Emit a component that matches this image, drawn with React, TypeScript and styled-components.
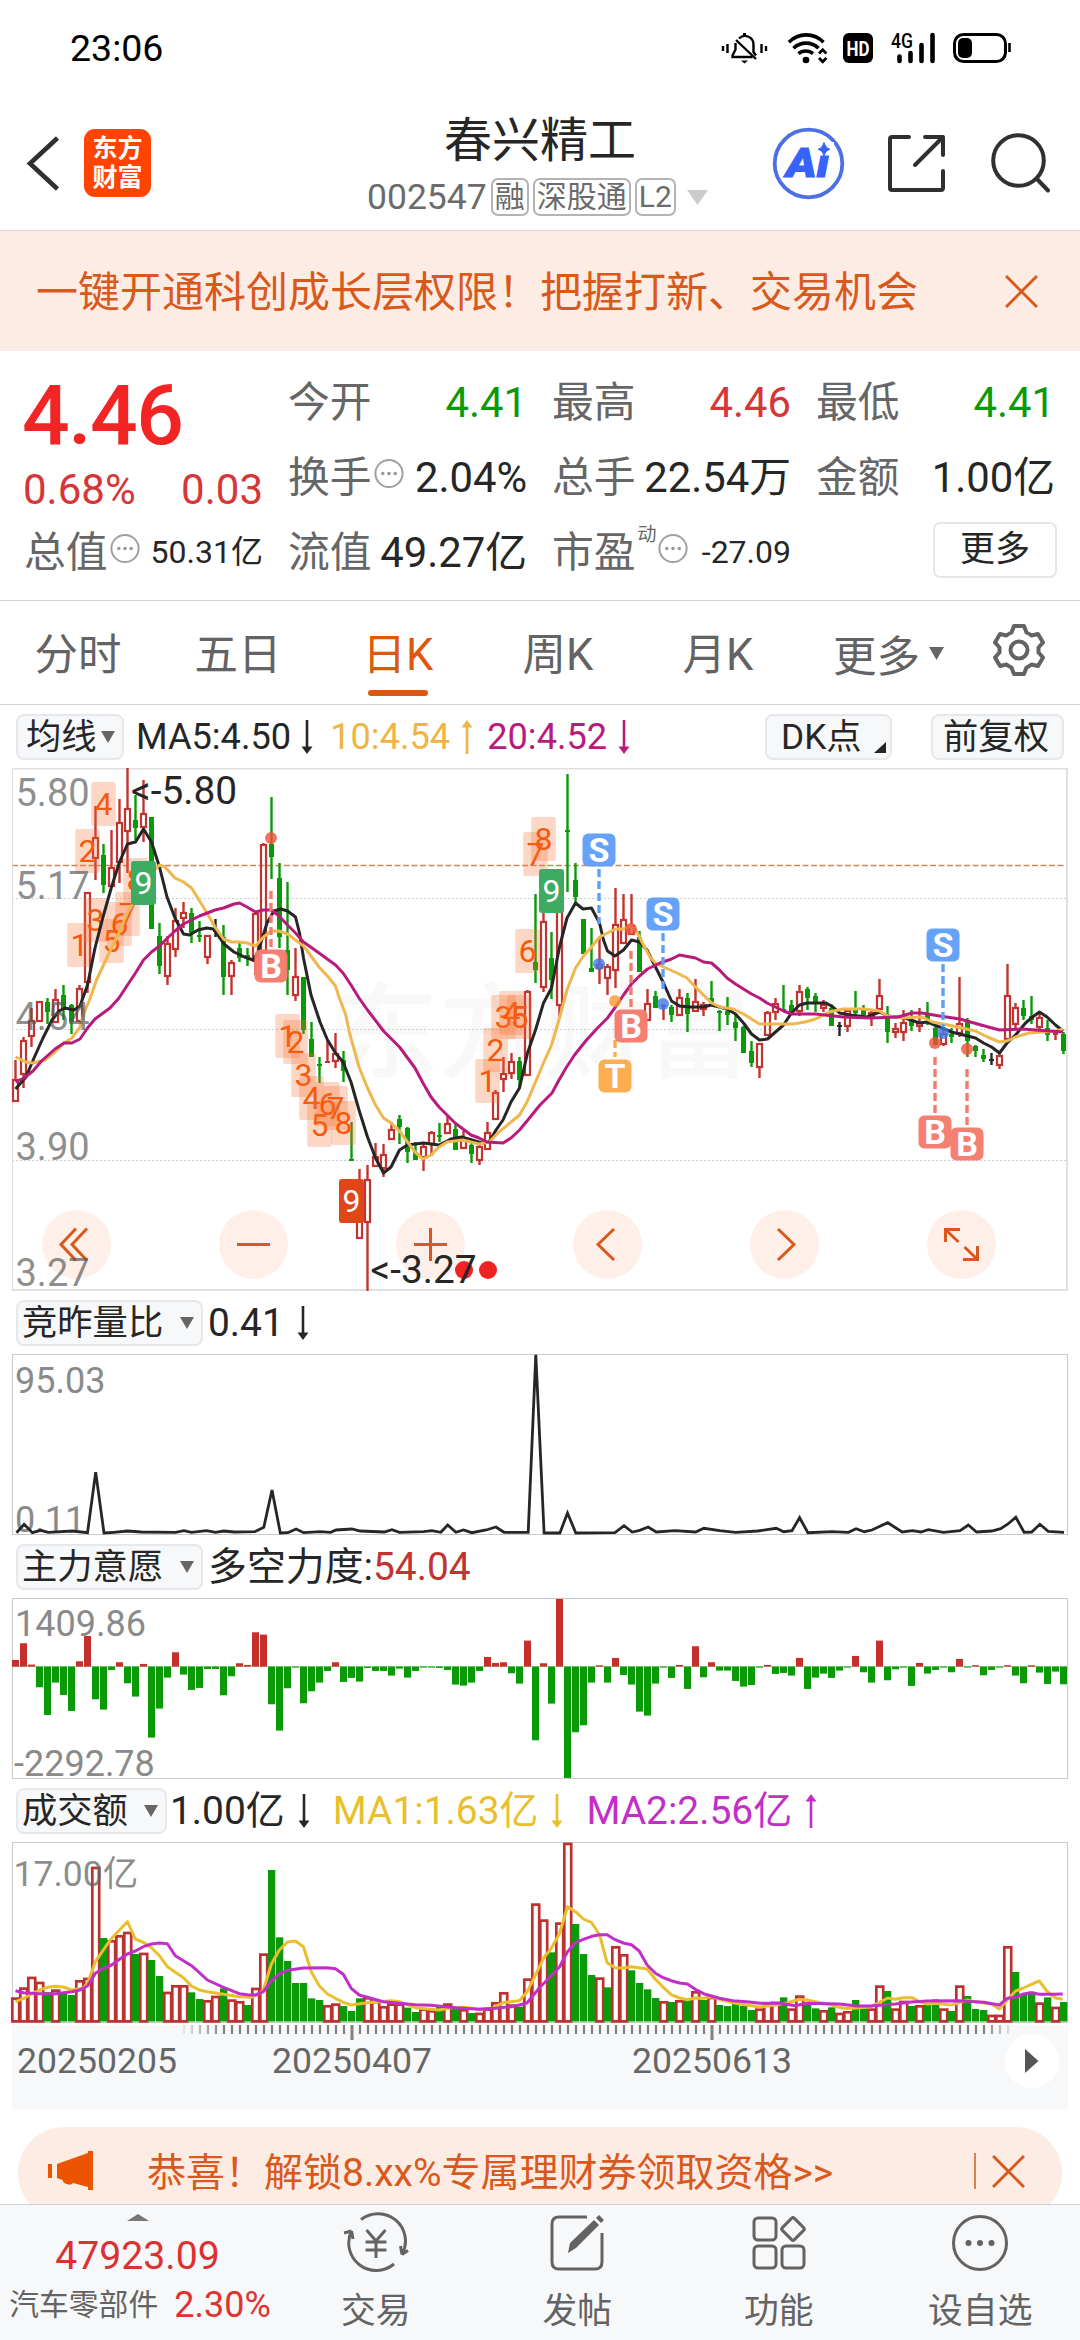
import React from "react";
import styled, { createGlobalStyle } from "styled-components";

const FONT = `Roboto, "Noto Sans CJK SC", sans-serif`;
const UP = "#c23431";
const DOWN = "#0a9a08";
const ORANGE = "#d9591d";

const Global = createGlobalStyle`
  html, body { margin: 0; padding: 0; background: #fff; }
  * { box-sizing: border-box; }
  body { font-family: ${FONT}; color: #262626; }
`;

/* ---------- market data ---------- */

type Kind = "r" | "g" | "k";
type Candle = [Kind, number, number, number, number];

const candles: Candle[] = [
  ["r", 1060, 1079, 1102, 1102], ["r", 1037, 1040, 1075, 1088], ["r", 1008, 1020, 1037, 1047], ["r", 1001, 1001, 1022, 1022],
  ["g", 998, 1002, 1012, 1024], ["r", 989, 999, 1023, 1023], ["g", 985, 995, 1010, 1020], ["g", 1004, 1005, 1022, 1034],
  ["r", 985, 988, 1022, 1022], ["r", 892, 892, 983, 993], ["r", 806, 837, 859, 880], ["g", 844, 855, 885, 893],
  ["r", 830, 867, 887, 887], ["r", 799, 822, 863, 883], ["r", 768, 808, 832, 873], ["g", 795, 820, 828, 840],
  ["r", 780, 813, 828, 842], ["g", 817, 817, 929, 929], ["g", 923, 936, 966, 974], ["r", 936, 943, 977, 985],
  ["r", 908, 920, 950, 957], ["r", 902, 912, 919, 928], ["g", 908, 913, 933, 943], ["g", 921, 935, 937, 942],
  ["r", 935, 935, 958, 964], ["k", 919, 929, 932, 937], ["g", 925, 937, 977, 995], ["r", 960, 962, 977, 995],
  ["g", 943, 948, 958, 962], ["g", 948, 955, 957, 966], ["r", 912, 913, 962, 975], ["r", 843, 844, 953, 962],
  ["g", 797, 844, 857, 879], ["g", 863, 878, 937, 948], ["g", 882, 950, 970, 995], ["r", 948, 976, 996, 1001],
  ["g", 977, 977, 1030, 1034], ["g", 1022, 1039, 1057, 1057], ["g", 1057, 1064, 1066, 1083], ["r", 1040, 1061, 1063, 1063],
  ["r", 1033, 1053, 1062, 1068], ["g", 1051, 1060, 1071, 1082], ["g", 1122, 1159, 1161, 1161], ["r", 1169, 1200, 1239, 1239],
  ["r", 1165, 1179, 1223, 1291], ["r", 1143, 1156, 1167, 1167], ["r", 1144, 1154, 1169, 1177], ["r", 1122, 1129, 1140, 1140],
  ["g", 1115, 1119, 1127, 1144], ["g", 1127, 1128, 1152, 1163], ["g", 1142, 1152, 1160, 1160], ["r", 1142, 1146, 1158, 1171],
  ["r", 1131, 1132, 1145, 1156], ["g", 1123, 1135, 1137, 1142], ["r", 1115, 1123, 1134, 1134], ["g", 1123, 1129, 1150, 1150],
  ["r", 1131, 1138, 1149, 1149], ["g", 1142, 1145, 1154, 1163], ["r", 1145, 1146, 1161, 1165], ["r", 1122, 1132, 1150, 1150],
  ["r", 1090, 1092, 1120, 1120], ["r", 1057, 1073, 1080, 1092], ["r", 1053, 1061, 1074, 1079], ["g", 1057, 1061, 1080, 1088],
  ["r", 990, 991, 1076, 1076], ["g", 894, 962, 970, 983], ["r", 890, 921, 988, 992], ["g", 932, 958, 980, 999],
  ["r", 875, 880, 1006, 1017], ["g", 774, 830, 832, 892], ["g", 863, 880, 897, 902], ["g", 919, 919, 954, 954],
  ["g", 928, 968, 972, 972], ["r", 938, 964, 969, 984], ["r", 964, 966, 979, 995], ["r", 888, 924, 971, 988],
  ["r", 894, 919, 944, 944], ["r", 894, 925, 935, 935], ["g", 931, 937, 972, 972], ["r", 989, 1003, 1021, 1021],
  ["g", 991, 996, 1008, 1008], ["r", 1004, 1005, 1007, 1020], ["g", 1005, 1007, 1015, 1022], ["r", 989, 997, 1016, 1016],
  ["g", 993, 998, 1014, 1032], ["r", 979, 1001, 1012, 1012], ["r", 1002, 1004, 1010, 1016], ["g", 981, 998, 1002, 1006],
  ["g", 1010, 1011, 1013, 1031], ["g", 997, 1011, 1015, 1025], ["g", 1015, 1022, 1028, 1041], ["g", 1026, 1027, 1053, 1053],
  ["g", 1041, 1051, 1063, 1067], ["r", 1043, 1043, 1068, 1078], ["r", 1011, 1012, 1036, 1036], ["r", 998, 1003, 1013, 1020],
  ["g", 985, 1009, 1011, 1012], ["g", 1000, 1005, 1012, 1014], ["r", 985, 991, 1012, 1016], ["g", 987, 989, 998, 1010],
  ["g", 993, 996, 1004, 1012], ["r", 1000, 1004, 1009, 1012], ["g", 1004, 1008, 1026, 1026], ["k", 1022, 1025, 1027, 1036],
  ["r", 1008, 1010, 1027, 1032], ["g", 991, 1008, 1013, 1016], ["g", 1005, 1008, 1015, 1016], ["r", 1010, 1012, 1018, 1026],
  ["r", 979, 995, 1010, 1014], ["g", 1006, 1017, 1032, 1043], ["r", 1023, 1028, 1033, 1038], ["r", 1010, 1022, 1033, 1041],
  ["g", 1010, 1020, 1026, 1031], ["r", 1008, 1022, 1027, 1032], ["g", 1002, 1013, 1020, 1025], ["g", 1026, 1028, 1045, 1045],
  ["r", 1030, 1033, 1045, 1046], ["g", 1028, 1034, 1037, 1043], ["r", 977, 1023, 1034, 1037], ["g", 1018, 1020, 1041, 1057],
  ["g", 1045, 1046, 1051, 1057], ["g", 1049, 1055, 1059, 1062], ["k", 1053, 1059, 1061, 1065], ["r", 1052, 1055, 1066, 1069],
  ["r", 964, 995, 1040, 1043], ["r", 1003, 1007, 1025, 1028], ["g", 1000, 1008, 1016, 1020], ["g", 996, 1016, 1020, 1024],
  ["r", 1012, 1017, 1028, 1030], ["g", 1020, 1028, 1035, 1041], ["r", 1032, 1033, 1035, 1040], ["g", 1032, 1034, 1051, 1054],
];

const ma5 = "15.5,1089 26,1077 34,1058 43,1038 52,1020 59,1011 65,1008 74,1010 80,1006 87.5,985 95,948 103,917 111.5,887 119.5,862 127.5,844 135.5,842 143.5,829 151.5,842 159.5,867 167,897 175,918 183.5,934 189.5,935 198,930 206.5,928 213.5,929 224,944 234,952 244.5,957 253,960 258,952 267,923 274,911 281,909 287.5,911 295.5,917 299.5,933 303.5,958 311,995 320,1022 327.5,1040 335.5,1053 343,1062 351,1082 359,1110 367.5,1137 375.5,1158 383.5,1173 391,1167 399.5,1150 407.5,1145 423.5,1143 439,1145 451,1139 461.5,1137 472,1140 482,1143 489,1142 496,1130 503,1120 511,1102 519.5,1088 527.5,1053 535.5,1030 543.5,1003 551.5,988 559.5,947 567,918 575.5,903 583,909 591.5,908 599.5,923 603.5,940 607.5,951 615,956 623.5,950 631.5,940 639.5,942 647,950 655.5,967 663.5,983 671.5,1001 679.5,1006 690,1007 703.5,1007 711,1005 719.5,1007 727,1009 735.5,1014 743.5,1023 751.5,1034 759.5,1040 767.5,1039 775.5,1032 783.5,1025 791.5,1013 799.5,1005 807,1003 826,1003 833,1007 839.5,1013 850,1015 867,1017 879.5,1012 888,1016 905,1018 919.5,1023 927.5,1022 939.5,1027 951.5,1032 967.5,1036 975.5,1038 983.5,1043 991.5,1047 999.5,1053 1007,1043 1015.5,1035 1025.5,1023 1032.5,1017 1039.5,1012 1047,1017 1055.5,1025 1063,1031";
const ma10 = "15.5,1057 26,1062 33,1063 45,1060 55,1052 64,1043 72,1038 80,1027 84,1013 89.5,1000 96.5,980 111.5,948 119.5,932 127.5,913 140,892 151.5,873 159.5,865 165,867 175,878 183.5,882 191.5,888 199,900 207,913 215,927 223.5,939 231.5,942 239,942 247,943 255.5,946 263.5,937 271.5,931 279,931 287.5,934 295.5,940 303.5,946 311,956 319,967 327.5,976 335.5,986 339,997 345.5,1014 349.5,1033 359,1067 367.5,1088 375.5,1105 383.5,1118 391,1123 399.5,1131 407.5,1142 415,1152 423,1159 431,1155 439,1147 447,1142 463,1140 479,1144 489,1142 499,1132 519.5,1115 527,1102 533,1088 543.5,1063 551.5,1045 559.5,1018 567,990 575.5,968 583.5,956 591.5,947 599.5,937 607.5,933 615.5,929 623.5,929 631.5,926 637,932 643.5,945 650,957 655.5,963 663.5,967 677,973 687,978 695.5,987 703.5,995 711.5,1003 720,1007 733,1009 743.5,1014 751.5,1019 759.5,1024 770,1024 793,1024 805,1022 815.5,1019 829,1012 843,1009 864,1009 879.5,1011 888,1016 901.5,1018 922,1017 932.5,1022 953,1026 975.5,1031 987.5,1037 999.5,1042 1007,1041 1015.5,1037 1029,1033 1043,1032 1056.5,1031 1063,1029";
const ma20 = "15.5,1082 24,1078 33,1071 41.5,1061 55,1049 64,1043 72,1043 80,1039 87.5,1028 95,1019 110,1008 119,998 127.5,985 135.5,973 143.5,960 151.5,952 159.5,946 167.5,938 175,931 183.5,924 199.5,916 215,910 223.5,908 234,904 239.5,903 247,907 255.5,912 263.5,910 271.5,910 279,916 287.5,925 295.5,933 303.5,942 319,953 335.5,965 343,973 351,985 359,998 367.5,1010 383.5,1031 399.5,1047 415,1068 423,1083 431,1097 439,1107 447,1115 455,1123 463,1129 471,1135 479,1138 487,1142 503,1143 511,1138 519.5,1130 527,1121 540,1105 552,1093 559,1080 566,1068 574.5,1055 586.5,1040 598.5,1027 607.5,1018 615.5,1007 623.5,995 631.5,984 639.5,976 647.5,969 660,963 671.5,959 679.5,955 695.5,958 703.5,962 711.5,963 719.5,970 727,978 735.5,984 751.5,994 759.5,998 767,1003 775.5,1007 783.5,1011 791.5,1014 815.5,1014 843,1017 870.5,1018 898,1017 912,1013 922,1013 939.5,1016 960,1019 981,1025 999.5,1030 1022,1029 1036,1030 1063,1032";

/* [candle index, top of the box, digit] */
const turns: [number, number, string][] = [
  [8, 923, "1"], [9, 829, "2"], [10, 898, "3"], [11, 782, "4"], [12, 919, "5"], [13, 902, "6"], [14, 892, "7"], [15, 858, "8"],
  [34, 1014, "1"], [35, 1020, "2"], [36, 1053, "3"], [37, 1076, "4"], [38, 1103, "5"], [39, 1082, "6"], [40, 1086, "7"], [41, 1101, "8"],
  [59, 1059, "1"], [60, 1028, "2"], [61, 995, "3"], [62, 991, "4"], [63, 995, "5"], [64, 929, "6"], [65, 832, "7"], [66, 817, "8"],
];
const nines: [number, number, string][] = [
  [16, 861, "#3dab61"], [42, 1179, "#e04618"], [67, 869, "#3dab61"],
];

/* [letter, x, badge y, dot y, dash start, dash end] */
const signals: [string, number, number, number, number, number][] = [
  ["B", 271, 966, 838, 891, 950], ["S", 599, 850, 964, 869, 924], ["S", 663, 914, 1004, 933, 989],
  ["T", 615, 1076, 1001, 1040, 1057], ["B", 631, 1026, 929, 951, 1008], ["S", 943, 945, 1033, 964, 1027],
  ["B", 935, 1132, 1043, 1057, 1114], ["B", 967, 1144, 1049, 1069, 1126],
];
const signalColor: Record<string, string> = { B: "#f57c6c", S: "#609ff8", T: "#fdab4b" };
const dotColor: Record<string, string> = { B: "#f0503c", S: "#3f78e8", T: "#fb9a2c" };

const ratio: [number, number][] = [
  [24, 578], [35, 553], [47, 578], [59, 571], [70, 577], [105, 573], [127, 578], [139, 397], [151, 579], [165, 577], [185, 573], [205, 576], [255, 577], [267, 572], [278, 577], [300, 572], [313, 577], [325, 573], [340, 576],
  [370, 575], [383, 562], [395, 450], [407, 579], [418, 578], [430, 567], [441, 578], [465, 575], [480, 577], [488, 570], [511, 567], [523, 573], [558, 576], [569, 569], [580, 577], [615, 575], [627, 572], [640, 577],
  [650, 555], [662, 577], [673, 570], [685, 578], [706, 570], [720, 561], [732, 577], [767, 577], [778, 44], [790, 579], [813, 579], [824, 519], [836, 579], [893, 578], [906, 557], [918, 576], [929, 571], [941, 561],
  [953, 576], [980, 572], [1010, 576], [1022, 565], [1045, 572], [1068, 577], [1100, 573], [1127, 565], [1138, 575], [1150, 572], [1161, 533], [1173, 578], [1208, 575], [1232, 577], [1243, 566], [1255, 575], [1266, 570],
  [1289, 548], [1310, 576], [1325, 572], [1337, 576], [1348, 569], [1370, 577], [1394, 572], [1406, 555], [1418, 576], [1440, 573], [1453, 566], [1464, 551], [1475, 532], [1487, 577], [1498, 576], [1510, 553], [1522, 574], [1545, 577],
];

const force = [
  960, 910, 974, 1042, 1125, 1028, 1065, 1113, 964, 888, 1078, 1109, 990, 967, 1030, 1070, 972, 1193, 1106, 1013, 937, 1004, 1050, 1044, 987, 987, 1066, 1009, 970, 975, 877, 884, 1093, 1172, 1045, 983,
  1090, 1054, 1028, 993, 967, 1026, 1014, 1025, 984, 993, 993, 1007, 986, 1013, 993, 983, 983, 984, 990, 1034, 1037, 1028, 993, 951, 969, 967, 1000, 1031, 902, 1201, 970, 1091, 777, 1314, 1177, 1156,
  1028, 976, 1028, 954, 1005, 1034, 1115, 1127, 1031, 983, 1014, 975, 1047, 919, 1012, 967, 992, 992, 1023, 1040, 1035, 983, 975, 1002, 999, 1007, 954, 1047, 1013, 1001, 1014, 992, 983, 948, 997, 1028,
  902, 1021, 988, 983, 1038, 969, 1001, 990, 983, 997, 957, 983, 976, 1006, 990, 983, 976, 1007, 1030, 976, 998, 1032, 995, 1033,
];

const turnover = (
  "r622 r592 r560 r575 g607 r598 g608 g615 r570 r563 r230 g444 r450 r435 r425 g492 r488 g510 g558 r605 r585 r585 g607 g627 r630 r617 g595 r628 r633 g645 r593 r490 g240 g442 g513 g579 g579 g625 g630 r645 r640 g648 g663 g625 r621 r632 r648 r640 r640 g653 g666 r655 r660 g650 r640 g657 r657 g669 r668 r655 r636 r606 r643 g650 r565 r340 " +
  "r388 g487 r397 r158 g402 g492 g555 r562 g592 r468 r492 g541 g579 g598 g624 r633 g636 r630 g630 r603 g630 r620 g645 g648 g640 g648 g660 r655 r640 r635 g622 r655 r616 g640 g655 r660 g652 r668 r663 g630 g655 r655 r586 g603 r655 r632 g648 r645 g640 g628 r655 g663 r586 g618 g657 g660 r674 r674 r468 g546 g615 g605 r637 g622 r650 g636"
).split(" ");

const volMa1Left = "45,635 68,626 91,612 115,600 138,592 161,589 184,591 208,600 240,595 254,580 277,515 300,480 320,450 347,420 370,395 393,447 416,457 440,473 463,497 486,530 509,547 533,563 556,588 579,600 602,605 649,613 695,620 730,622 753,610 765,600 788,523 811,480 835,456 858,453 881,470 904,545 927,587 951,612 974,625 997,637 1020,645 1067,638 1136,632 1160,635 1206,653 1275,660 1310,653 1345,652 1392,658 1430,655 1461,638 1508,632 1531,605 1568,528";
const volMa1Right = "10,505 33,475 57,430 80,350 103,365 126,387 150,398 173,435 195,518 218,533 242,534 265,530 311,537 335,568 358,592 381,614 405,624 428,629 451,624 475,625 498,620 521,628 560,638 600,645 637,651 684,645 720,638 753,628 776,630 800,635 846,645 880,655 910,655 960,650 986,637 1010,624 1032,628 1055,623 1080,623 1102,635 1125,642 1150,640 1195,645 1218,638 1241,630 1264,635 1311,642 1334,657 1357,630 1381,603 1404,594 1427,583 1450,573 1473,604 1497,624 1518,628";
const volMa2Left = "45,602 68,608 115,611 161,611 208,605 232,600 254,588 277,550 300,535 324,525 347,508 370,492 393,483 416,470 440,462 463,459 486,461 509,497 556,527 579,548 602,570 649,592 695,611 718,614 742,615 765,605 788,573 811,552 835,541 881,534 951,533 974,536 997,553 1020,595 1043,615 1067,622 1113,635 1160,640 1206,644 1252,646 1322,653 1392,658 1438,655 1485,650 1508,645 1531,638 1568,592";
const volMa2Right = "33,557 57,530 80,485 103,458 126,448 150,439 173,434 195,434 218,449 242,459 265,464 288,483 311,525 335,550 358,563 381,572 405,579 428,582 451,598 475,611 521,625 560,632 600,635 640,640 700,640 740,647 776,640 870,642 920,648 960,648 1032,642 1078,636 1125,633 1218,632 1288,637 1334,645 1357,625 1381,622 1404,612 1427,608 1450,613 1490,613 1518,612";

const xAt = (i: number) => 15.5 + 8 * i;
const toPage = (pts: string, dx: number) =>
  pts
    .split(" ")
    .map((p) => {
      const [x, y] = p.split(",").map(Number);
      return `${(dx + x / 2.904).toFixed(1)},${(1790 + y / 3).toFixed(1)}`;
    })
    .join(" ");

/* ---------- styled parts ---------- */

const Page = styled.div`
  width: 1080px;
  height: 2340px;
  display: flex;
  flex-direction: column;
  background: #fff;
  overflow: hidden;
`;

const StatusBar = styled.div`
  height: 96px;
  flex: none;
  display: flex;
  justify-content: space-between;
  padding: 26px 66px 0 70px;
`;
const Clock = styled.div`
  font-size: 37.5px;
  line-height: 44px;
  color: #000;
`;
const Header = styled.header`
  height: 135px;
  flex: none;
  display: grid;
  grid-template-columns: 340px 400px 340px;
  border-bottom: 1px solid #d4d4d4;
`;
const HeaderLeft = styled.div`
  display: flex;
  align-items: flex-start;
  padding: 33px 0 0 24px;
  gap: 20px;
`;
const Logo = styled.div`
  width: 67px;
  height: 68px;
  border-radius: 11px;
  background: #fe4400;
  color: #fff;
  font-size: 25px;
  line-height: 29px;
  font-weight: 700;
  text-align: center;
  padding-top: 5px;
`;
const HeaderMid = styled.div`
  display: flex;
  flex-direction: column;
  align-items: center;
  padding-top: 17px;
  gap: 9px;
`;
const Title = styled.div`
  font-size: 48px;
  line-height: 56px;
`;
const CodeRow = styled.div`
  display: flex;
  align-items: center;
  gap: 4px;
  padding-left: 27px;
  font-size: 36px;
  line-height: 38px;
  color: #6b6b6b;
  white-space: nowrap;
  width: 400px;
  > svg { margin-left: 7px; }
`;
const Code = styled.span`
  font-size: 35.5px;
`;
const Tag = styled.span`
  height: 38px;
  padding: 0 2px;
  border: 2px solid #b3b3b3;
  border-radius: 7px;
  font-size: 30px;
  line-height: 34px;
`;
const HeaderRight = styled.div`
  display: flex;
  padding: 29px 0 0 32px;
`;

const Banner = styled.div`
  height: 120px;
  flex: none;
  display: flex;
  align-items: center;
  justify-content: space-between;
  padding: 0 42px 0 36px;
  background: #fcece3;
  color: ${ORANGE};
  font-size: 42px;
  line-height: 60px;
  white-space: nowrap;
  > span { margin-top: 4px; }
`;

const Quote = styled.section`
  height: 250px;
  flex: none;
  display: grid;
  grid-template-columns: repeat(4, 239px);
  column-gap: 25px;
  padding: 14px 0 0 24px;
  border-bottom: 1px solid #d4d4d4;
`;
const QuoteCol = styled.div`
  display: flex;
  flex-direction: column;
`;
const Price = styled.div`
  height: 101px;
  margin-left: -2px;
  font-size: 84px;
  line-height: 102px;
  font-weight: 500;
  letter-spacing: -1.5px;
  color: #f22424;
`;
const Change = styled.div`
  height: 49px;
  margin-left: -1px;
  display: flex;
  justify-content: space-between;
  font-size: 42px;
  line-height: 48px;
  color: #d63636;
`;
const Cell = styled.div`
  height: 75px;
  display: flex;
  align-items: center;
  line-height: 75px;
  white-space: nowrap;
`;
const Label = styled.span`
  font-size: 41.8px;
  color: #666;
`;
const Value = styled.span<{ $color?: string; $small?: boolean }>`
  margin-left: auto;
  font-size: ${(p) => (p.$small ? 32 : 41.8)}px;
  color: ${(p) => p.$color || "#262626"};
`;
const Sup = styled.span`
  font-size: 19px;
  line-height: 20px;
  color: #666;
  margin: -36px -1px 0 2px;
`;
const MoreButton = styled.button`
  margin: -5px -2px 0 auto;
  width: 124px;
  height: 56px;
  padding: 0;
  border: 2px solid #e6e6e8;
  border-radius: 7px;
  background: #fff;
  color: #262626;
  font: 35px/50px ${FONT};
`;

const Tabs = styled.nav`
  height: 104px;
  flex: none;
  display: flex;
  border-bottom: 1px solid #d4d4d4;
`;
const Tab = styled.div<{ $active?: boolean }>`
  width: 160px;
  height: 103px;
  display: flex;
  flex-direction: column;
  align-items: center;
  font-size: 43.5px;
  line-height: 86px;
  padding-top: 12px;
  color: ${(p) => (p.$active ? "#df560d" : "#636363")};
  &:first-child { width: 158px; padding-right: 2px; }
  &::after {
    content: "";
    width: 60px;
    height: 6px;
    margin-top: -9px;
    border-radius: 3px;
    background: ${(p) => (p.$active ? "#df560d" : "transparent")};
  }
`;
const TabMore = styled.div`
  display: flex;
  align-items: center;
  gap: 9px;
  padding: 2px 0 0 35px;
  font-size: 43.5px;
  color: #636363;
  width: 195px;
`;

const IndicatorRow = styled.div`
  height: 63px;
  flex: none;
  display: flex;
  align-items: center;
  padding: 0 16px 0 16px;
  font-size: 38px;
  line-height: 46px;
  white-space: nowrap;
`;
const Picker = styled.div<{ $w: number }>`
  width: ${(p) => p.$w}px;
  height: 46px;
  flex: none;
  display: flex;
  align-items: center;
  justify-content: space-between;
  padding: 0 7px 0 4px;
  border: 2px solid #e6e8eb;
  border-radius: 8px;
  background: #f7f8fa;
  font-size: 35.3px;
  line-height: 42px;
`;
const Reading = styled.span<{ $color?: string; $ml: number; $size?: number }>`
  margin-left: ${(p) => p.$ml}px;
  font-size: ${(p) => p.$size || 38.9}px;
  color: ${(p) => p.$color || "#262626"};
`;
const Spacer = styled.div`
  flex: 1;
`;

const MainPanel = styled.div`
  position: relative;
  height: 523px;
  flex: none;
`;
const ChartSvg = styled.svg`
  position: relative;
  display: block;
  flex: none;
  font-family: ${FONT};
`;
const Controls = styled.div`
  position: absolute;
  left: 42px;
  top: 442px;
  display: flex;
  gap: 108px;
`;
const RoundButton = styled.div`
  width: 69px;
  height: 69px;
  border-radius: 50%;
  background: #fef0e9;
  display: flex;
`;

const PromoArea = styled.div`
  height: 95px;
  flex: none;
  padding: 18px 18px 0;
  overflow: hidden;
`;
const Promo = styled.div`
  height: 92px;
  border-radius: 46px;
  background: #fcece3;
  color: ${ORANGE};
  display: flex;
  align-items: center;
  padding: 0 37px 4px 30px;
  font-size: 39px;
  white-space: nowrap;
`;
const PromoText = styled.span`
  margin: -5px 0 0 54px;
  flex: 1;
`;
const Divider = styled.span`
  width: 2px;
  height: 36px;
  background: #d98057;
  margin-right: 16px;
`;

const BottomNav = styled.nav`
  height: 136px;
  flex: none;
  display: grid;
  grid-template-columns: 275px repeat(4, 201.5px);
  background: #f7f8fa;
  border-top: 1px solid #cfd2d6;
`;
const IndexCell = styled.div`
  display: flex;
  flex-direction: column;
  align-items: center;
  padding-top: 9px;
`;
const IndexValue = styled.div`
  font-size: 39.2px;
  line-height: 46px;
  margin-top: 12px;
  color: #dd3030;
`;
const IndexSector = styled.div`
  display: flex;
  align-items: center;
  gap: 16px;
  font-size: 29.8px;
  line-height: 46px;
  margin-top: 3px;
  margin-right: -5px;
  color: #636363;
  white-space: nowrap;
`;
const SectorChange = styled.span`
  font-size: 36px;
  color: #d33;
`;
const NavItem = styled.div`
  display: flex;
  flex-direction: column;
  align-items: center;
  padding-top: 7px;
  font-size: 34.8px;
  line-height: 46px;
  color: #636363;
  > svg { margin-bottom: 14px; }
`;

/* ---------- small drawings ---------- */

const Caret = ({ w = 14, h = 12, color = "#666" }) => (
  <svg width={w} height={h} viewBox="0 0 10 10" preserveAspectRatio="none">
    <path d="M0 0H10L5 10Z" fill={color} />
  </svg>
);

const Arrow = ({ up, color, ml }: { up?: boolean; color: string; ml: number }) => (
  <svg width="12" height="34" viewBox="0 0 12 34" style={{ marginLeft: ml, transform: up ? "scaleY(-1)" : undefined }}>
    <path d="M6 0V30" stroke={color} strokeWidth="2.6" />
    <path d="M0.5 26.5H11.5L6 34Z" fill={color} />
  </svg>
);

const Close = ({ size = 33 }) => (
  <svg width={size} height={size} viewBox="0 0 31 31" stroke={ORANGE} strokeWidth="2.8" fill="none">
    <path d="M1 1L30 30M30 1L1 30" />
  </svg>
);

const Info = () => (
  <svg width="30" height="31" viewBox="0 0 30 31" style={{ marginLeft: 2, marginTop: -8 }}>
    <circle cx="15" cy="15.5" r="13.6" fill="none" stroke="#a0a0a0" strokeWidth="2" />
    <g fill="#999">
      <circle cx="8.8" cy="15.5" r="1.8" />
      <circle cx="15" cy="15.5" r="1.8" />
      <circle cx="21.2" cy="15.5" r="1.8" />
    </g>
  </svg>
);

const StatusIcons = () => (
  <svg width="294" height="36" viewBox="720 30 294 36" style={{ marginTop: 4 }}>
    <g stroke="#000" fill="none" strokeWidth="2.4">
      <path d="M723 46v5M727.5 44v9M761.5 44v9M766 46v5" />
      <path d="M739 38.5a8.5 8.5 0 0 1 14.5 6.5v7l2.5 3.5M735.5 43v6.5l-3 6v1.500h20" />
      <path d="M736 40l20 19" />
      <path d="M744.500 33v3" strokeWidth="3" />
      <path d="M741 60.500h7l-3.500 3Z" fill="#000" strokeWidth="0" />
      <g strokeWidth="3.6">
        <path d="M789 42.200a24 24 0 0 1 34.500 0" />
        <path d="M793.500 48.200a18 18 0 0 1 25 0" />
        <path d="M798.500 53.700a11 11 0 0 1 14.500 0" />
      </g>
      <path d="M819 53.500l3.700-3.700 3.700 3.700M819 58l3.700 3.700 3.700-3.700" strokeWidth="2.8" />
    </g>
    <circle cx="806" cy="60" r="3.300" />
    <rect x="843" y="33" width="30" height="30" rx="6" />
    <text x="858" y="55.500" textAnchor="middle" textLength="23" lengthAdjust="spacingAndGlyphs" fontSize="21" fontWeight="700" fill="#fff" fontFamily="Roboto">HD</text>
    <text x="891" y="48" textLength="22" lengthAdjust="spacingAndGlyphs" fontSize="20" fontWeight="500" fontFamily="Roboto">4G</text>
    <path d="M899.500 56.500v4.500M910.500 53v8M921.500 45v16M932.500 35v26" stroke="#000" strokeWidth="4.600" strokeLinecap="round" />
    <rect x="954.500" y="34.500" width="51" height="27" rx="9" fill="none" stroke="#000" strokeWidth="3" />
    <rect x="958" y="38" width="14" height="20" rx="5" />
    <path d="M1009.500 43v9" stroke="#000" strokeWidth="2.600" />
  </svg>
);

const HeaderIcons = () => (
  <svg width="290" height="76" viewBox="772 125 290 76">
    <circle cx="808.500" cy="163.500" r="33.800" fill="none" stroke="#4a6fe6" strokeWidth="3.800" />
    <text x="786" y="176.500" fontSize="41" fontWeight="900" fontStyle="italic" fill="#3763fb" stroke="#3763fb" strokeWidth="1" textLength="43" lengthAdjust="spacingAndGlyphs" fontFamily="Roboto">Ai</text>
    <rect x="815.500" y="142" width="18.500" height="13.500" fill="#fff" />
    <path d="M824 142.500Q825.500 148 830 149.300Q825.500 150.500 824 156Q822.500 150.500 818 149.300Q822.500 148 824 142.500Z" fill="#3763fb" stroke="#3763fb" />
    <g fill="none" stroke="#303030" strokeWidth="4" strokeLinecap="round" strokeLinejoin="round">
      <path d="M909 137H892Q890 137 890 139V188Q890 190 892 190H941Q943 190 943 188V171" />
      <path d="M925 137H943V155M942 138L915 165" />
      <circle cx="1018.500" cy="160.500" r="25.300" />
      <path d="M1037 179L1048 190.500" />
    </g>
  </svg>
);

const Gear = () => (
  <svg width="52" height="54" viewBox="-26 -27 52 54" fill="none" stroke="#636363" strokeWidth="4" strokeLinejoin="round">
    <path d="M-5 -24H5L7.500 -17.500Q10 -16.500 12.500 -14.500L19 -16L24 -7.500L19.500 -2.500V2.500L24 7.500L19 16L12.500 14.500Q10 16.500 7.500 17.500L5 24H-5L-7.500 17.500Q-10 16.500 -12.500 14.500L-19 16L-24 7.500L-19.500 2.500V-2.500L-24 -7.500L-19 -16L-12.500 -14.500Q-10 -16.500 -7.500 -17.500Z" />
    <circle r="8.500" />
  </svg>
);

const controlPaths = [
  "M34 18.500L19 34.500L34 50.500M45 18.500L30 34.500L45 50.500",
  "M18 34.500H51",
  "M18 34.500H51M34.500 18V51",
  "M41 19L25 34.500L41 50",
  "M28 19L44 34.500L28 50",
  "M18.500 32V19.500H33M19.500 20.500L31.500 32M50.500 36V49.500H36M49.500 48.500L37.500 37",
];

/* ---------- charts ---------- */

const axisLabels: [string, number][] = [["5.80", 806], ["5.17", 899], ["4.54", 1030], ["3.90", 1160], ["3.27", 1286]];

const MainChart = () => (
  <ChartSvg width="1080" height="523" viewBox="0 768 1080 523">
    <text x="335" y="1070" fontSize="104" fontWeight="500" fill="#8a8a8a" fillOpacity="0.06">东方财富</text>
    <g stroke="#cfcfcf" strokeDasharray="2 2">
      <path d="M12 898.500H1067M12 1029.500H1067M12 1160.500H1067" />
    </g>
    <path d="M12 865.500H1067" stroke="#c98a5c" strokeWidth="1.500" strokeDasharray="6 2.500" />
    <path d="M12.500 768V1291" stroke="#dcdcdc" />
    <path d="M12 768.500H1067V1290H12" fill="none" stroke="#e0e0e0" strokeWidth="2" />
    {candles.map(([k, hi, top, bot, lo], i) => {
      const x = xAt(i);
      const c = k === "r" ? UP : k === "g" ? DOWN : "#262626";
      const flat = bot - top < 4;
      return (
        <g key={i} stroke={c} strokeWidth="2.400">
          {hi < top && <path d={`M${x} ${hi}V${top + 1}`} />}
          {lo > bot && <path d={`M${x} ${bot - 1}V${lo}`} />}
          {k === "r" && !flat ? (
            <rect x={x - 2.500} y={top + 1} width="5" height={Math.max(2, bot - top - 2)} fill="none" strokeWidth="2.200" />
          ) : (
            <rect x={x - 2.500} y={top} width="5" height={Math.max(2, bot - top)} fill={c} stroke="none" />
          )}
        </g>
      );
    })}
    {turns.map(([i, y, n], j) => (
      <g key={j}>
        <rect x={xAt(i) - 12.300} y={y} width="24.600" height="44" rx="2" fill="#f9712f" fillOpacity="0.28" />
        <text x={xAt(i)} y={y + 33} fontSize="32" textAnchor="middle" fill="#f55a0c">{n}</text>
      </g>
    ))}
    <g fill="none" strokeWidth="3" strokeLinejoin="round">
      <polyline points={ma5} stroke="#262626" />
      <polyline points={ma10} stroke="#efb74e" />
      <polyline points={ma20} stroke="#b81b7b" />
    </g>
    {nines.map(([i, y, c]) => (
      <g key={i}>
        <rect x={xAt(i) - 12.500} y={y} width="25" height="44" rx="3" fill={c} />
        <text x={xAt(i)} y={y + 33} fontSize="32" textAnchor="middle" fill="#fff">9</text>
      </g>
    ))}
    {signals.map(([s, x, by, dy, d1, d2], j) => (
      <g key={j}>
        <path d={`M${x} ${d1}V${d2}`} stroke={signalColor[s]} strokeWidth="3.400" strokeDasharray="8 4" />
        <circle cx={x} cy={dy} r="6" fill={dotColor[s]} fillOpacity="0.8" />
        <rect x={x - 16.500} y={by - 16.500} width="33" height="33" rx="6" fill={signalColor[s]} fillOpacity="0.97" />
        <text x={x} y={by + 12} fontSize="34" fontWeight="700" textAnchor="middle" fill="#fff">{s}</text>
      </g>
    ))}
    <circle cx="464" cy="1270" r="9" fill="#f02323" />
    <circle cx="488" cy="1270" r="9" fill="#f02323" />
    <g fontSize="38" fill="#555" fillOpacity="0.68">
      {axisLabels.map(([t, y]) => (
        <text key={t} x="15.500" y={y}>{t}</text>
      ))}
    </g>
    <g fontSize="38.800" fill="#262626">
      <text x="131" y="804">&lt;-5.80</text>
      <text x="370.500" y="1282.500">&lt;-3.27</text>
    </g>
  </ChartSvg>
);

const Frame = ({ y }: { y: number }) => <rect x="12.500" y={y + 0.5} width="1055" height="180" fill="none" stroke="#c9c9c9" />;

const RatioChart = () => (
  <ChartSvg width="1080" height="181" viewBox="0 1354 1080 181">
    <Frame y={1354} />
    <g fontSize="36" fill="#8a8a8a">
      <text x="15" y="1392.500">95.03</text>
      <text x="15" y="1532">0.11</text>
    </g>
    <polyline points={ratio.map(([x, y]) => `${(x / 1.452).toFixed(1)},${(1340 + y / 3).toFixed(1)}`).join(" ")} fill="none" stroke="#262626" strokeWidth="2.800" />
  </ChartSvg>
);

const ForceChart = () => (
  <ChartSvg width="1080" height="181" viewBox="0 1598 1080 181">
    <Frame y={1598} />
    <path d="M12 1666.500H1067" stroke="#a9d3a9" />
    {force.map((v, i) => {
      const up = v < 980;
      const h = Math.abs(980 - v) / 3;
      return <rect key={i} x={xAt(i) - 3.500} y={up ? 1666.600 - h : 1666.600} width="7" height={h} fill={up ? "#c5302d" : DOWN} />;
    })}
    <g fontSize="36" fill="#8a8a8a">
      <text x="15" y="1636">1409.86</text>
      <text x="14" y="1776">-2292.78</text>
    </g>
  </ChartSvg>
);

const VolumeChart = () => (
  <ChartSvg width="1080" height="181" viewBox="0 1842 1080 181">
    <Frame y={1842} />
    {turnover.map((t, i) => {
      const y = 1790 + Number(t.slice(1)) / 3;
      const h = 2021.500 - y;
      return t[0] === "r" ? (
        <rect key={i} x={xAt(i) - 3.200} y={y + 1.300} width="6.900" height={h - 1.500} fill="#fff" stroke="#bb3230" strokeWidth="2.700" />
      ) : (
        <rect key={i} x={xAt(i) - 3.500} y={y} width="7.300" height={h} fill={DOWN} />
      );
    })}
    <g fill="none" strokeWidth="3" strokeLinejoin="round">
      <polyline points={`${toPage(volMa1Left, 0)} ${toPage(volMa1Right, 540)}`} stroke="#e9bf2c" />
      <polyline points={`${toPage(volMa2Left, 0)} ${toPage(volMa2Right, 540)}`} stroke="#c22fc8" />
    </g>
    <text x="13.500" y="1886" fontSize="35.500" fill="#666" fillOpacity="0.76">17.00亿</text>
  </ChartSvg>
);

const TimeAxis = () => (
  <ChartSvg width="1080" height="86" viewBox="0 2023 1080 86">
    <rect x="12" y="2025" width="1056" height="84" fill="#f7f8fa" />
    {Array.from({ length: 95 }, (_, k) => k + 21).map((i) => {
      const big = i === 42 || i === 87;
      const fade = Math.min(1, (i - 20) / 6, (128 - i) / 4);
      return <path key={i} d={`M${xAt(i) + 0.5} 2025V${big ? 2040 : 2034}`} stroke="#808080" strokeWidth={big ? 3 : 2.200} opacity={fade} />;
    })}
    {Array.from({ length: 9 }, (_, k) => k + 116).map((i) => (
      <path key={i} d={`M${xAt(i) + 0.5} 2025V2034`} stroke="#808080" strokeWidth="2.200" opacity={Math.min(1, (125 - i) / 4)} />
    ))}
    <g fontSize="35.600" fill="#666">
      <text x="17" y="2072.500">20250205</text>
      <text x="352" y="2072.500" textAnchor="middle">20250407</text>
      <text x="712" y="2072.500" textAnchor="middle">20250613</text>
    </g>
    <circle cx="1032" cy="2061" r="27" fill="#fff" />
    <path d="M1025 2049L1038.500 2061L1025 2073Z" fill="#555" />
  </ChartSvg>
);

/* ---------- page ---------- */

const stroke = { fill: "none", stroke: "#636363", strokeWidth: 3 };

export default function App() {
  return (
    <Page>
      <Global />
      <StatusBar>
        <Clock>23:06</Clock>
        <StatusIcons />
      </StatusBar>
      <Header>
        <HeaderLeft>
          <svg width="40" height="68" viewBox="24 129 40 68" fill="none" stroke="#303030" strokeWidth="4.600">
            <path d="M57.500 138L30 163.500L57.500 189" />
          </svg>
          <Logo>东方<br />财富</Logo>
        </HeaderLeft>
        <HeaderMid>
          <Title>春兴精工</Title>
          <CodeRow>
            <Code>002547</Code>
            <Tag>融</Tag>
            <Tag>深股通</Tag>
            <Tag>L2</Tag>
            <Caret w={21} h={15} color="#ccc" />
          </CodeRow>
        </HeaderMid>
        <HeaderRight>
          <HeaderIcons />
        </HeaderRight>
      </Header>
      <Banner>
        <span>一键开通科创成长层权限！把握打新、交易机会</span>
        <Close />
      </Banner>
      <Quote>
        <QuoteCol>
          <Price>4.46</Price>
          <Change><span>0.68%</span><span>0.03</span></Change>
          <Cell><Label>总值</Label><Info /><Value $small>50.31亿</Value></Cell>
        </QuoteCol>
        <QuoteCol>
          <Cell><Label>今开</Label><Value $color={DOWN}>4.41</Value></Cell>
          <Cell><Label>换手</Label><Info /><Value>2.04%</Value></Cell>
          <Cell><Label>流值</Label><Value>49.27亿</Value></Cell>
        </QuoteCol>
        <QuoteCol>
          <Cell><Label>最高</Label><Value $color="#d63636">4.46</Value></Cell>
          <Cell><Label>总手</Label><Value>22.54万</Value></Cell>
          <Cell><Label>市盈</Label><Sup>动</Sup><Info /><Value $small>-27.09</Value></Cell>
        </QuoteCol>
        <QuoteCol>
          <Cell><Label>最低</Label><Value $color={DOWN}>4.41</Value></Cell>
          <Cell><Label>金额</Label><Value>1.00亿</Value></Cell>
          <Cell><MoreButton>更多</MoreButton></Cell>
        </QuoteCol>
      </Quote>
      <Tabs>
        <Tab>分时</Tab>
        <Tab>五日</Tab>
        <Tab $active>日K</Tab>
        <Tab>周K</Tab>
        <Tab>月K</Tab>
        <TabMore>更多<Caret w={15} h={13} /></TabMore>
        <svg width="52" height="103" viewBox="0 0 52 103"><g transform="translate(0 22)"><Gear /></g></svg>
      </Tabs>
      <IndicatorRow>
        <Picker $w={108}><span style={{ marginLeft: 4 }}>均线</span><Caret /></Picker>
        <Reading $ml={12} $size={36.2}>MA5:4.50</Reading>
        <Arrow color="#262626" ml={10} />
        <Reading $ml={17} $size={36.2} $color="#efb445">10:4.54</Reading>
        <Arrow up color="#efb445" ml={11} />
        <Reading $ml={14} $size={36.2} $color="#b81b7b">20:4.52</Reading>
        <Arrow color="#b81b7b" ml={11} />
        <Spacer />
        <Picker $w={127}>
          <span style={{ marginLeft: 10 }}>DK点</span>
          <svg width="12" height="34" viewBox="0 0 12 34" style={{ marginRight: -3 }}><path d="M12 22V33H0Z" fill="#262626" /></svg>
        </Picker>
        <div style={{ width: 39 }} />
        <Picker $w={133}><span style={{ margin: "0 auto" }}>前复权</span></Picker>
      </IndicatorRow>
      <MainPanel>
        <Controls>
          {controlPaths.map((d) => (
            <RoundButton key={d}>
              <svg width="69" height="69" viewBox="0 0 69 69" fill="none" stroke={ORANGE} strokeWidth="3"><path d={d} /></svg>
            </RoundButton>
          ))}
        </Controls>
        <MainChart />
      </MainPanel>
      <IndicatorRow>
        <Picker $w={187}>竞昨量比<Caret /></Picker>
        <Reading $ml={5}>0.41</Reading>
        <Arrow color="#262626" ml={13} />
      </IndicatorRow>
      <RatioChart />
      <IndicatorRow>
        <Picker $w={187}>主力意愿<Caret /></Picker>
        <Reading $ml={5}>多空力度:</Reading>
        <Reading $ml={0} $color={UP}>54.04</Reading>
      </IndicatorRow>
      <ForceChart />
      <IndicatorRow>
        <Picker $w={151}>成交额<Caret /></Picker>
        <Reading $ml={3}>1.00亿</Reading>
        <Arrow color="#262626" ml={13} />
        <Reading $ml={23} $color="#e9bf2c">MA1:1.63亿</Reading>
        <Arrow color="#e9bf2c" ml={13} />
        <Reading $ml={23} $color="#c22fc8">MA2:2.56亿</Reading>
        <Arrow up color="#c22fc8" ml={13} />
      </IndicatorRow>
      <VolumeChart />
      <TimeAxis />
      <PromoArea>
        <Promo>
          <svg width="45" height="40" viewBox="0 0 45 40" fill="#ec5500">
            <path d="M0 13H4V27H0ZM9 13L40 2V0H45V39H40V36L25 32Q23 35 19 33Q15 32 14.500 29L9 27Z" />
          </svg>
          <PromoText>恭喜！解锁8.xx%专属理财券领取资格&gt;&gt;</PromoText>
          <Divider />
          <Close size={33} />
        </Promo>
      </PromoArea>
      <BottomNav>
        <IndexCell>
          <svg width="22" height="7" viewBox="0 0 22 7"><path d="M0 7L11 0L22 7Z" fill="#777" /></svg>
          <IndexValue>47923.09</IndexValue>
          <IndexSector>汽车零部件<SectorChange>2.30%</SectorChange></IndexSector>
        </IndexCell>
        <NavItem>
          <svg width="66" height="62" viewBox="-33 -31 66 62" {...stroke}>
            <path d="M-15 -23.500A27.500 27.500 0 0 1 26 11.500M26 11.500L32 7.500M26 11.500L24.500 3M18 21A27.500 27.500 0 0 1 -24.500 -12M-24.500 -12L-32 -10M-24.500 -12L-23 -4" />
            <path d="M-9.500 -13L0 -2L9.500 -13M-10.500 -1H10.500M-10.500 7H10.500M0 -2V15" />
          </svg>
          交易
        </NavItem>
        <NavItem>
          <svg width="66" height="62" viewBox="-33 -31 66 62" {...stroke}>
            <path d="M10 -26H-18Q-25 -26 -25 -19V19Q-25 26 -18 26H18Q25 26 25 19V-10" />
            <path d="M-9 10L-7 0L17 -23L22 -18L-1 5Z" fill="#636363" stroke="none" />
            <path d="M19 -25L22 -28L27 -23L24 -20Z" fill="#636363" stroke="none" />
          </svg>
          发帖
        </NavItem>
        <NavItem>
          <svg width="66" height="62" viewBox="-33 -31 66 62" {...stroke}>
            <rect x="-25" y="-25" width="22" height="22" rx="4" />
            <rect x="-25" y="3" width="22" height="22" rx="4" />
            <rect x="3" y="3" width="22" height="22" rx="4" />
            <rect x="5.500" y="-22.500" width="17" height="17" rx="2" transform="rotate(45 14 -14)" />
          </svg>
          功能
        </NavItem>
        <NavItem>
          <svg width="66" height="62" viewBox="-33 -31 66 62" {...stroke}>
            <circle r="26.500" />
            <g fill="#636363" stroke="none"><circle cx="-11.500" r="3" /><circle r="3" /><circle cx="11.500" r="3" /></g>
          </svg>
          设自选
        </NavItem>
      </BottomNav>
    </Page>
  );
}
